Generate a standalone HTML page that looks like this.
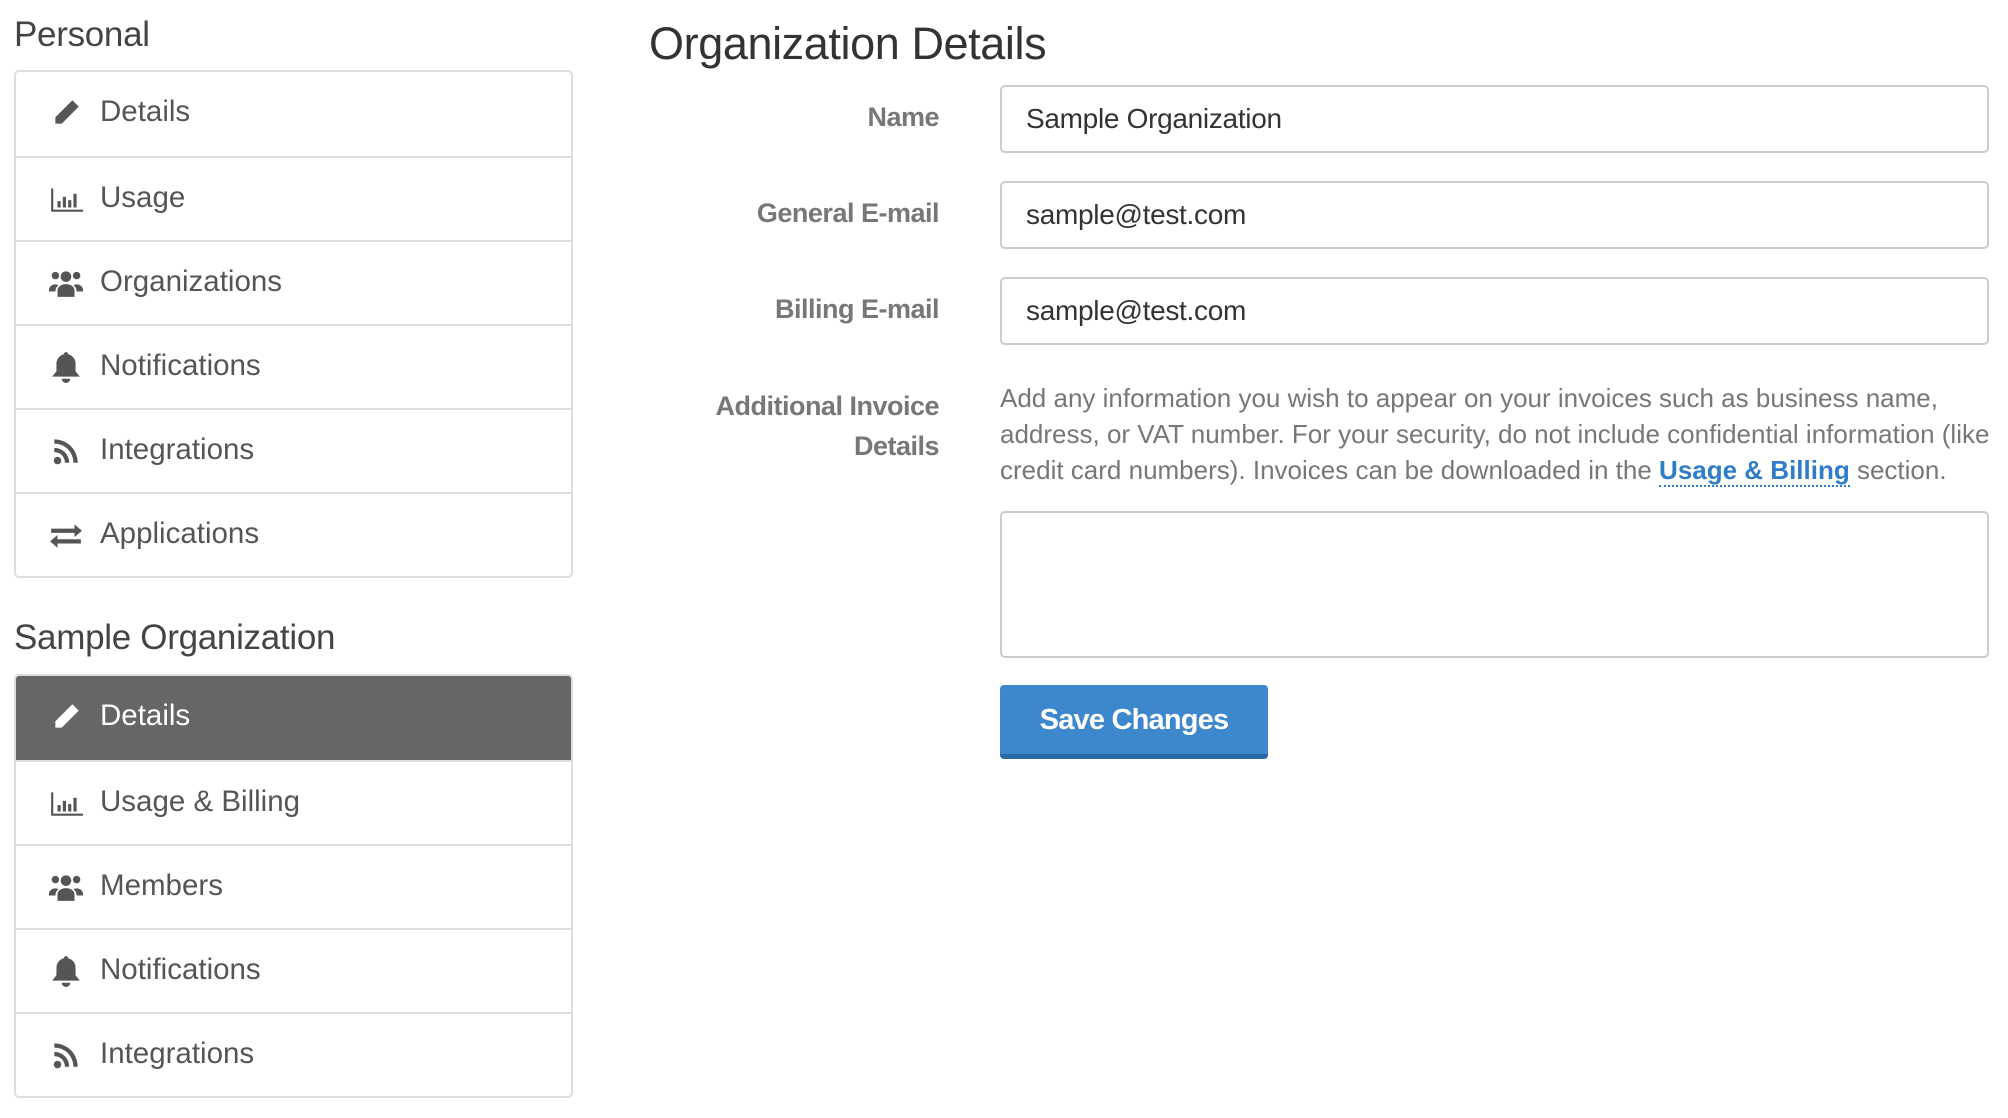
<!DOCTYPE html>
<html><head><meta charset="utf-8"><style>
*{box-sizing:border-box;margin:0;padding:0}
body{width:2008px;height:1118px;background:#fff;font-family:"Liberation Sans",sans-serif;color:#555;position:relative;overflow:hidden}
.h{position:absolute;left:14px;font-size:35px;color:#444;letter-spacing:-0.3px}
.box{position:absolute;left:14px;width:559px;border:2px solid #ddd;border-radius:5px;overflow:hidden}
.row{height:84px;border-top:2px solid #ddd;position:relative;font-size:29.5px;color:#555;line-height:80px;padding-left:84px;letter-spacing:0}
.row:first-child{border-top:none}
.row.act{background:#666;color:#fff}
.row svg{position:absolute;left:33px;top:24px;width:34px;height:34px;fill:#555}
.row.act svg{fill:#fff}
.t{position:absolute;left:649px;top:18px;font-size:45px;color:#333;letter-spacing:-0.4px}
.lbl{position:absolute;right:1069px;text-align:right;font-size:27px;font-weight:bold;color:#777;letter-spacing:-0.5px}
.in{position:absolute;left:1000px;width:989px;height:68px;border:2px solid #ccc;border-radius:5px;font-size:28px;color:#333;padding-left:24px;line-height:64px;letter-spacing:-0.3px}
.help{position:absolute;left:1000px;top:380px;width:990px;font-size:26px;line-height:36px;color:#777;letter-spacing:0}
.help a{color:#2f7dc8;font-weight:bold;text-decoration:none;border-bottom:2px dotted #2f7dc8}
.ta{position:absolute;left:1000px;top:511px;width:989px;height:147px;border:2px solid #ccc;border-radius:5px}
.btn{position:absolute;left:1000px;top:685px;width:268px;height:74px;background:#3d87cc;border-bottom:5px solid #2a6aa5;border-radius:4px;color:#fff;font-size:29px;font-weight:bold;text-align:center;line-height:70px;letter-spacing:-0.8px}
</style></head><body>
<div class="h" style="top:15px">Personal</div>
<div class="box" style="top:70px">
<div class="row"><svg viewBox="0 0 32 32"><path d="M22 4l6 6L12 26l-6 0 0-6z M6 22l4 4" /></svg>Details</div>
<div class="row"><svg viewBox="0 0 32 32"><path d="M2 6h2v20h28v2H2z M8 18h3v6H8z M13 14h3v10h-3z M18 17h3v7h-3z M23 11h3v13h-3z"/></svg>Usage</div>
<div class="row"><svg viewBox="0 0 32 32"><circle cx="16" cy="10" r="5"/><circle cx="6" cy="9" r="3.5"/><circle cx="26" cy="9" r="3.5"/><path d="M8 29v-6a8 6 0 0 1 16 0v6z M0 22a6 5 0 0 1 9-4 9 8 0 0 0-3 6H0z M32 22a6 5 0 0 0-9-4 9 8 0 0 1 3 6h6z"/></svg>Organizations</div>
<div class="row"><svg viewBox="0 0 32 32"><path d="M16 2a2 2 0 0 1 2 2 9 9 0 0 1 7 9v7l4 5H3l4-5v-7a9 9 0 0 1 7-9 2 2 0 0 1 2-2z M12 27h8a4 4 0 0 1-8 0z"/></svg>Notifications</div>
<div class="row"><svg viewBox="0 0 32 32"><circle cx="8" cy="25" r="3.5"/><path d="M5 13a14 14 0 0 1 14 14h-4A10 10 0 0 0 5 17z M5 5a22 22 0 0 1 22 22h-4A18 18 0 0 0 5 9z"/></svg>Integrations</div>
<div class="row"><svg viewBox="0 0 32 32"><path d="M2 10h22V6l7 6-7 6v-4H2z M30 20H8v-4l-7 6 7 6v-4h22z"/></svg>Applications</div>
</div>
<div class="h" style="top:618px">Sample Organization</div>
<div class="box" style="top:674px">
<div class="row act"><svg viewBox="0 0 32 32"><path d="M22 4l6 6L12 26l-6 0 0-6z"/></svg>Details</div>
<div class="row"><svg viewBox="0 0 32 32"><path d="M2 6h2v20h28v2H2z M8 18h3v6H8z M13 14h3v10h-3z M18 17h3v7h-3z M23 11h3v13h-3z"/></svg>Usage &amp; Billing</div>
<div class="row"><svg viewBox="0 0 32 32"><circle cx="16" cy="10" r="5"/><circle cx="6" cy="9" r="3.5"/><circle cx="26" cy="9" r="3.5"/><path d="M8 29v-6a8 6 0 0 1 16 0v6z M0 22a6 5 0 0 1 9-4 9 8 0 0 0-3 6H0z M32 22a6 5 0 0 0-9-4 9 8 0 0 1 3 6h6z"/></svg>Members</div>
<div class="row"><svg viewBox="0 0 32 32"><path d="M16 2a2 2 0 0 1 2 2 9 9 0 0 1 7 9v7l4 5H3l4-5v-7a9 9 0 0 1 7-9 2 2 0 0 1 2-2z M12 27h8a4 4 0 0 1-8 0z"/></svg>Notifications</div>
<div class="row"><svg viewBox="0 0 32 32"><circle cx="8" cy="25" r="3.5"/><path d="M5 13a14 14 0 0 1 14 14h-4A10 10 0 0 0 5 17z M5 5a22 22 0 0 1 22 22h-4A18 18 0 0 0 5 9z"/></svg>Integrations</div>
</div>
<div class="t">Organization Details</div>
<div class="lbl" style="top:102px">Name</div>
<div class="in" style="top:85px">Sample Organization</div>
<div class="lbl" style="top:198px">General E-mail</div>
<div class="in" style="top:181px">sample@test.com</div>
<div class="lbl" style="top:294px">Billing E-mail</div>
<div class="in" style="top:277px">sample@test.com</div>
<div class="lbl" style="top:386px;line-height:40px">Additional Invoice<br>Details</div>
<div class="help">Add any information you wish to appear on your invoices such as business name,<br>address, or VAT number. For your security, do not include confidential information (like<br>credit card numbers). Invoices can be downloaded in the <a>Usage &amp; Billing</a> section.</div>
<div class="ta"></div>
<div class="btn">Save Changes</div>
</body></html>
